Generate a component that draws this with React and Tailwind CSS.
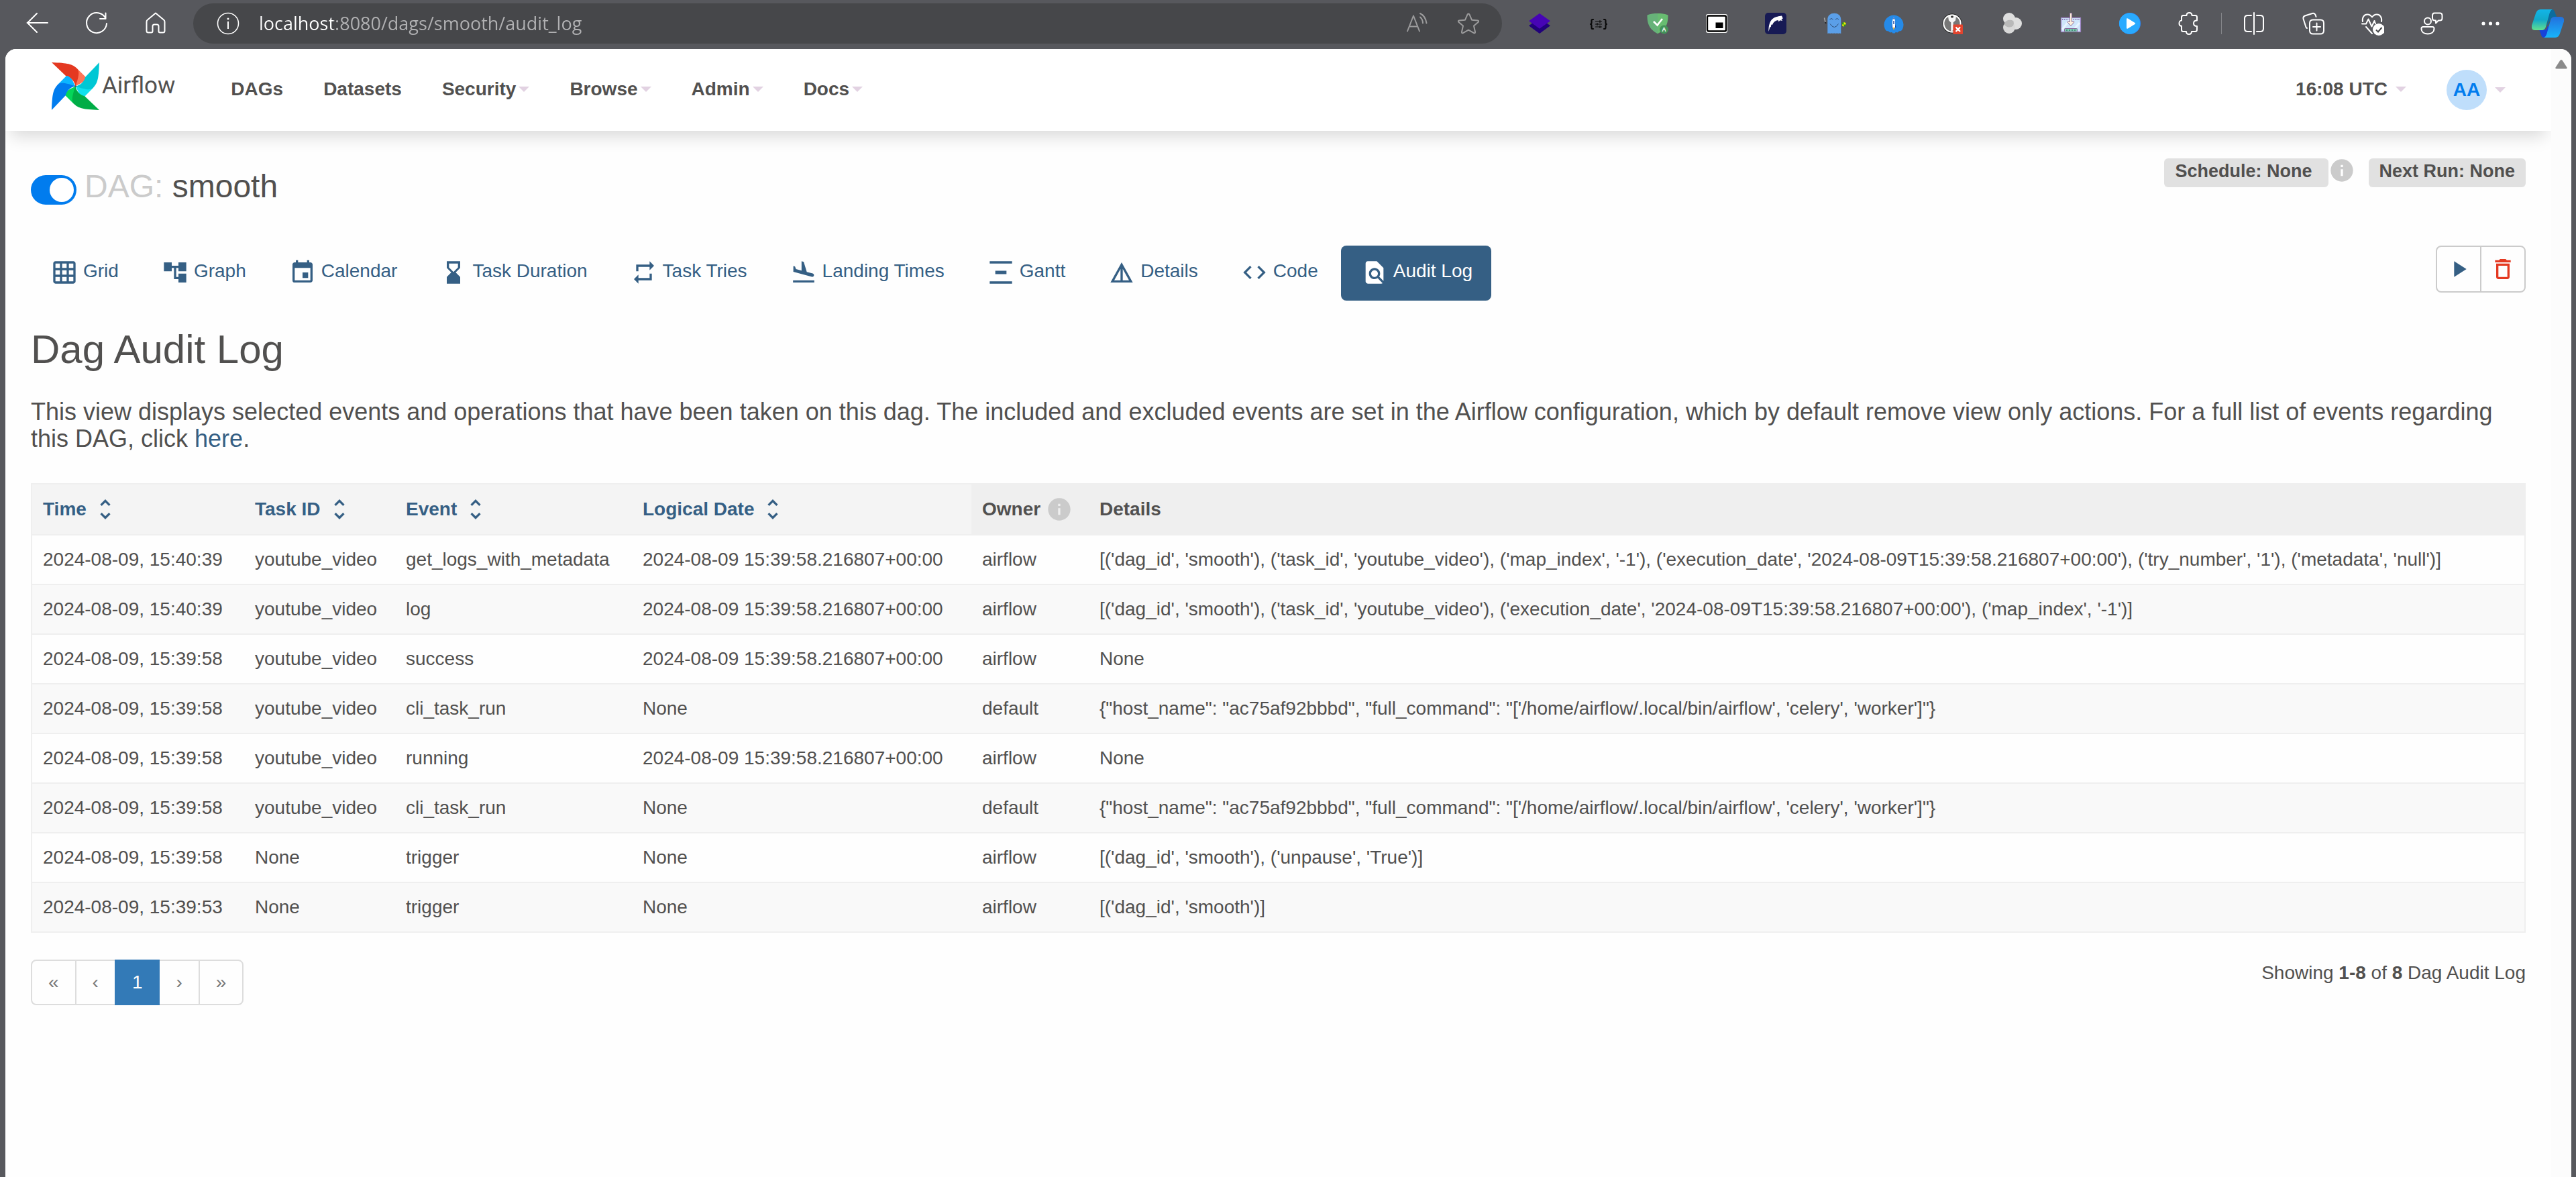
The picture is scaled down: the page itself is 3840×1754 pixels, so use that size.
import {
  MdAccountTree,
  MdCode,
  MdDeleteOutline,
  MdDetails,
  MdEvent,
  MdFindInPage,
  MdFlightLand,
  MdGridOn,
  MdHourglassBottom,
  MdInfo,
  MdPlayArrow,
  MdRepeat,
  MdUnfoldMore,
  MdVerticalDistribute,
} from "react-icons/md";

/* ---------- browser toolbar ---------- */

function Glyph({ children }) {
  return (
    <svg viewBox="0 0 36 36" className="size-9" fill="none" aria-hidden="true">
      {children}
    </svg>
  );
}

function Line({ d, color = "#fff", width = 2 }) {
  return (
    <path d={d} stroke={color} strokeWidth={width} strokeLinecap="round" strokeLinejoin="round" />
  );
}

function ToolButton({ label, children }) {
  return (
    <button type="button" aria-label={label} className="flex h-15 w-22 shrink-0 items-center justify-center">
      <Glyph>{children}</Glyph>
    </button>
  );
}

const extensions = [
  {
    label: "Layers",
    art: (
      <>
        <path d="M18 10l16 11.3L18 33 2 21.3z" fill="#21017a" />
        <path d="M18 3l16 11.3-16 11.4L2 14.3z" fill="#4704b5" />
      </>
    ),
  },
  {
    label: "JSON settings",
    art: (
      <>
        <Line color="#0a0a0a" width={2.2} d="M10 12H9q-1.500 0-1.500 2v2.500Q7.500 19 6 19q1.500 0 1.500 2.500V24q0 2 1.500 2h1M26 12h1q1.500 0 1.500 2v2.500q0 2.500 1.500 2.500-1.500 0-1.500 2.500V24q0 2-1.500 2h-1" />
        <Line color="#0a0a0a" width={1.2} d="M13.500 15h9M13.500 19h9M13.500 23h9M20 13.500v3M16 17.500v3M20 21.500v3" />
      </>
    ),
  },
  {
    label: "Ad blocker",
    art: (
      <>
        <path d="M18 3C12.500 3 7 3.600 2.500 5.500c0 9 .5 20 15.500 27.700z" fill="#67b279" />
        <path d="M18 3c5.500 0 11 .6 15.500 2.500 0 9-.5 20-15.500 27.700z" fill="#68bc71" />
        <path d="M12 15l5.500 5.500L25 11" stroke="#fff" strokeWidth="2.600" />
        <circle cx="27.500" cy="27" r="6.500" fill="#44935a" />
        <text x="27.500" y="30" textAnchor="middle" fontSize="9" fontWeight="700" fontFamily="Liberation Sans, sans-serif" fill="#fff">A</text>
      </>
    ),
  },
  {
    label: "Picture in picture",
    art: (
      <>
        <rect x="2" y="4" width="32" height="28" rx="3" fill="#fff" />
        <rect x="4" y="6.500" width="28" height="23" rx="2" stroke="#000" strokeWidth="2.400" />
        <rect x="16.500" y="16.500" width="11" height="8.500" fill="#000" />
      </>
    ),
  },
  {
    label: "Panther",
    art: (
      <>
        <rect x="2" y="2" width="32" height="32" rx="5" fill="#171a54" />
        <path d="M7.500 30C7 21 9.500 12 16.500 9c2-1 4-1 5.500-1.800l5-.7c.8 1.500 1.600 3 1.500 4.500l-2 .3 1.500 2.700-3.500-.7-2 2-1-2.300c-4 .5-7 3-8.500 7l-1.500-.5-.8 4-1.200-.5z" fill="#fff" />
      </>
    ),
  },
  {
    label: "Ghost",
    art: (
      <>
        <path d="M7.300 33V12.500C7.300 6 11.500 2.700 17.300 2.700S27.300 6 27.300 12.500V33l-2-.6-2 .6-2-.6-2 .6-2-.6-2 .6-2-.6-2 .6-2-.6z" fill="#5b9fe8" />
        <path d="M10.500 12q2.500-3 5 0M19 12q2.500-3 5 0M11 18.500q6.500 10 12.500 0" stroke="#2f4f78" strokeWidth="1" />
        <path d="M2.500 9.500l1.500 6.500" stroke="#aaa" strokeWidth="1.500" />
        <path d="M4 16l1.200 2" stroke="#222" strokeWidth="1.500" />
        <path d="M29 17l2.500-1 3 1v3.500L31.500 23 29 21z" fill="#2ea010" />
        <path d="M31.500 16l3 1v2.500h-3zM29 19.500h2.500V23L29 21z" fill="#f2e70c" />
      </>
    ),
  },
  {
    label: "Rocket",
    art: (
      <>
        <path d="M5 26.500A14.500 14.500 0 1 1 31 26.500l-2 2.500-3 .5-2.500 2-2.800-.5-1 1.500h-3.400l-1-1.500-2.800.5-2.500-2L7 29z" fill="#258ae8" />
        <path d="M18 8.500c1.500 2.500 2 5 2 8V24h-4v-7.500c0-3 .5-5.500 2-8z" fill="#fff" />
        <path d="M18 8.500l1 3h-2zM17.300 14h1.400v5h-1.400zM16 19l-1.500 5H16zM20 19l1.500 5H20z" fill="#173f9c" />
        <path d="M16.500 24h3L18 28z" fill="#f6b22c" />
      </>
    ),
  },
  {
    label: "Password manager",
    art: (
      <>
        <circle cx="17" cy="18" r="14.300" fill="#777" stroke="#222" strokeWidth="1" />
        <circle cx="17" cy="18" r="12.600" stroke="#fff" strokeWidth="2" />
        <path d="M11 7.500q6-3.500 12 0l-1 6-3.300 3V28l-3.400 2V16.500L12 13.500z" fill="#f5f5f5" />
        <rect x="15" y="6.500" width="4" height="3" rx="1.500" fill="#333" />
        <rect x="18.500" y="19.500" width="14.500" height="14.500" rx="1" fill="#e3442e" />
        <path d="M22.500 23.500l6.500 6.500M29 23.500l-6.500 6.500" stroke="#fff" strokeWidth="2.400" />
      </>
    ),
  },
  {
    label: "Bubbles",
    art: (
      <>
        <circle cx="14" cy="11" r="9" fill="#dedede" />
        <circle cx="24" cy="18" r="9" fill="#dedede" />
        <circle cx="14" cy="24" r="9" fill="#d8d8d8" />
        <path d="M6.500 19a9 9 0 0 1 14-4.500 9 9 0 0 1-.5 7 9 9 0 0 1-13.500-2.500z" fill="#b9b9b9" />
      </>
    ),
  },
  {
    label: "Video downloader",
    art: (
      <>
        <rect x="3.500" y="9.500" width="29" height="21" fill="#cfe6fb" stroke="#9a7fc0" strokeWidth="1.200" />
        <path d="M5 12h26" stroke="#8a78b8" strokeWidth="2" strokeDasharray="1.200 1.500" />
        <path d="M5 27l11-14M20 30l11-13" stroke="#e8f4ff" strokeWidth="3" />
        <rect x="8.500" y="25.500" width="19" height="5" rx="1" fill="#7cc9b1" stroke="#8a6a9a" strokeWidth="1" />
        <path d="M11 28h14" stroke="#4d8d7c" strokeWidth="1.800" strokeDasharray="2 2" />
        <path d="M16.500 2.500h3v13l2.500-1 1 1.500-5 5.500-5-5.500 1-1.500 2.500 1z" fill="#fdf1dc" stroke="#8a6a9a" strokeWidth="1" />
      </>
    ),
  },
  {
    label: "Player",
    art: (
      <>
        <circle cx="18" cy="18" r="16" fill="#2a8cff" />
        <circle cx="17.500" cy="18" r="15.500" fill="#29aaff" />
        <path d="M13 11.500q0-2 2-1l10.500 6.500q1.500 1 0 2L15 25.500q-2 1-2-1z" fill="#fff" />
      </>
    ),
  },
  {
    label: "Extensions",
    art: (
      <Line d="M7 13.500V8.500Q7 6 9.500 6h5c0-2.500 1.500-4 4-4s4 1.500 4 4h5q2.500 0 2.500 2.500v5c-3 0-5 1.500-5 4.300s2 4.200 5 4.200v5q0 3-2.500 3h-5.500c0 2.500-1.500 4-4 4s-4-1.500-4-4H9.500Q7 30 7 27.500v-5.800c-2 0-3.500-1.700-3.500-4s1.500-4.200 3.500-4.200z" />
    ),
  },
];

const browserTools = [
  {
    label: "Split screen",
    art: <Line d="M18 2v32M14 6H8.500Q4 6 4 10.500v15Q4 30 8.500 30H14M22 6h5.500Q32 6 32 10.500v15q0 4.500-4.500 4.500H22" />,
  },
  {
    label: "Collections",
    art: (
      <Line d="M18 12.500h11q5 0 5 5v11q0 5-5 5H18q-5 0-5-5v-11q0-5 5-5zM23.500 17.500v11M18 23h11M9 25q-1.500-.5-2-3L3.500 11Q3 7.500 6 6.500L17 3q3-1 4.500 2l1 3" />
    ),
  },
  {
    label: "Browser essentials",
    art: (
      <>
        <Line d="M4 15C3 9 6 4.500 11 4.500q4 0 7 4 3-4 7-4c5 0 8 4.500 7 10.500M3 18.500h6l3.500-7 5 11 4-8.500 1.500 4.500M9 23l9 10" />
        <circle cx="28" cy="27" r="9" fill="#fff" />
        <path d="M24 27.500l3 3 5.500-6.500" stroke="#46474a" strokeWidth="2" />
      </>
    ),
  },
  {
    label: "Feedback",
    art: (
      <>
        <circle cx="13" cy="14.500" r="5" stroke="#fff" strokeWidth="2" />
        <Line d="M6 23h14q2.500 0 2.500 2.500c0 5-4 8-9.500 8s-9.500-3-9.500-8Q3.500 23 6 23zM23 2.500h8q3.500 0 3.500 3.500v4q0 3.500-3.500 3.500h-2l-4 4v-4h-1.500Q20 13.500 20 10V6q0-3.500 3-3.500z" />
      </>
    ),
  },
  {
    label: "Settings and more",
    art: (
      <>
        <circle cx="8" cy="18" r="2.600" fill="#fff" />
        <circle cx="18.500" cy="18" r="2.600" fill="#fff" />
        <circle cx="29" cy="18" r="2.600" fill="#fff" />
      </>
    ),
  },
];

function Copilot() {
  return (
    <svg viewBox="0 0 48 42" className="h-[42px] w-12" aria-hidden="true">
      <defs>
        <linearGradient id="cpA" x1="0" y1="0" x2="0" y2="1">
          <stop offset="0" stopColor="#12b5e8" />
          <stop offset="0.500" stopColor="#12a9c9" />
          <stop offset="1" stopColor="#63e08e" />
        </linearGradient>
        <linearGradient id="cpB" x1="0" y1="0" x2="0" y2="1">
          <stop offset="0" stopColor="#2370dd" />
          <stop offset="1" stopColor="#17b4fb" />
        </linearGradient>
      </defs>
      <path d="M26 0h4q3 0 4.500 4l2.500 7h-4q-3 0-4.500 4l-6 10z" fill="#0b6c9e" />
      <path d="M11 30h11l2-6 4 6-7 12h-3q-3 0-4-4z" fill="#1743d8" />
      <path d="M13 0h18q-3 1-4.500 6L21 26q-1.500 5-6 5H5q-6 0-5-7L6 6q2-6 7-6z" fill="url(#cpA)" />
      <path d="M35 42H18q3-1 4.500-6L28 16q1.500-5 6-5h9q6 0 5 7l-6 18q-2 6-7 6z" fill="url(#cpB)" />
    </svg>
  );
}

function BrowserBar() {
  return (
    <header className="flex h-[73px] items-start pt-[5px] pl-3">
      <ToolButton label="Back">
        <Line d="M2.500 17H33M17 3L3 17l14 14" />
      </ToolButton>
      <ToolButton label="Refresh">
        <Line d="M31.500 10.500A15 15 0 1 0 33 18M31.500 2.500v8.500h-8.500" />
      </ToolButton>
      <ToolButton label="Home">
        <Line d="M18 2.500L6 12.500q-1.500 1-1.500 3V29q0 2.500 2.500 2.500h4.500q2 0 2-2V22q0-2.500 2.500-2.500h4q2.500 0 2.500 2.500v7.500q0 2 2 2H29q2.500 0 2.500-2.500V15.500q0-2-1.500-3z" />
      </ToolButton>
      <div className="ml-3 flex h-15 min-w-0 flex-1 items-center rounded-full bg-[#46474a] pl-8.5 pr-3">
        <Glyph>
          <circle cx="18" cy="18" r="15.500" stroke="#fff" strokeWidth="1.600" />
          <path d="M18 15v11" stroke="#fff" strokeWidth="2" />
          <circle cx="18" cy="11" r="1.500" fill="#fff" />
        </Glyph>
        <input
          aria-label="Address"
          defaultValue="localhost:8080/dags/smooth/audit_log"
          className="ml-7 h-10 min-w-0 flex-1 bg-[linear-gradient(90deg,#fff_111px,#b1b1b3_111px)] bg-clip-text font-['Open_Sans','Noto_Sans',sans-serif] text-[27px] leading-10 text-transparent outline-none"
        />
        <button type="button" aria-label="Read aloud" className="flex w-20 justify-center">
          <Glyph>
            <Line color="#9b9b9c" d="M5 29.500L14 6.500l9 23M8 22.500h12M24 8.500q4 3.500 4 9M24 3q8 4 9.500 14.500" />
          </Glyph>
        </button>
        <button type="button" aria-label="Add to favorites" className="flex w-19 justify-center">
          <Glyph>
            <Line color="#9b9b9c" d="M18 3.500q1 0 1.500 1.200l3.500 8 8.700.8q2.500.5.800 2.500L26 21.500l2 9q.2 2.500-2 1.700l-8-4.500-8 4.500q-2.200.8-2-1.700l2-9L3.500 16q-1.700-2 .8-2.500l8.700-.8 3.500-8Q17 3.500 18 3.500z" />
          </Glyph>
        </button>
      </div>
      <div className="ml-3 flex shrink-0 items-center">
        {extensions.map((e) => (
          <ToolButton key={e.label} label={e.label}>
            {e.art}
          </ToolButton>
        ))}
        <span className="mx-1 h-8 w-px bg-[#85868a]" />
        {browserTools.map((t) => (
          <ToolButton key={t.label} label={t.label}>
            {t.art}
          </ToolButton>
        ))}
        <button type="button" aria-label="Copilot" className="flex w-21 justify-center">
          <Copilot />
        </button>
      </div>
    </header>
  );
}

/* ---------- Airflow ---------- */

const blades = [
  { turn: 0, dark: "#e43921", light: "#ff7557" },
  { turn: 90, dark: "#00c7d4", light: "#11e1ee" },
  { turn: 180, dark: "#00ad46", light: "#04d659" },
  { turn: 270, dark: "#017cee", light: "#0cb6ff" },
];

function Pinwheel() {
  return (
    <svg viewBox="0 0 70 70" className="size-[71px]" aria-hidden="true">
      {blades.map((b) => (
        <g key={b.turn} transform={`rotate(${b.turn} 35 35)`}>
          <path d="M38 9.500L49.500 21Q51 22 50 24C47 30 42 31 35 35z" fill={b.light} />
          <path d="M0 0C24 1 30 2 38 9.500 41 14 40 21 35 35 33.500 27 28 22 21.500 20.500z" fill={b.dark} />
        </g>
      ))}
      <circle cx="35" cy="35" r="1.200" fill="#51504f" />
    </svg>
  );
}

function Caret() {
  return <span className="size-0 border-x-8 border-t-8 border-x-transparent border-t-[#e2d2e2]" />;
}

const menu = [
  { name: "DAGs" },
  { name: "Datasets" },
  { name: "Security", drop: true },
  { name: "Browse", drop: true },
  { name: "Admin", drop: true },
  { name: "Docs", drop: true },
];

function NavBar() {
  return (
    <nav className="flex h-[122px] items-center bg-white pr-17 pl-[69px] text-[28px] font-bold shadow-[0_16px_24px_-8px_rgba(0,0,0,0.15)]">
      <a href="#home" className="mr-[83px] flex items-center gap-1 pb-3 font-['Roboto',sans-serif] text-[35px] leading-10 font-normal">
        <Pinwheel />
        Airflow
      </a>
      <div className="flex flex-1 gap-15 pb-0.5">
        {menu.map((m) =>
          m.drop ? (
            <button key={m.name} type="button" className="flex items-center gap-1 leading-10">
              {m.name}
              <Caret />
            </button>
          ) : (
            <a key={m.name} href={`#${m.name}`} className="leading-10">
              {m.name}
            </a>
          ),
        )}
      </div>
      <button type="button" className="mr-15 flex items-center gap-3 pb-0.5 leading-10">
        16:08 UTC
        <Caret />
      </button>
      <button type="button" className="flex items-center gap-3">
        <span className="flex size-15 items-center justify-center rounded-full bg-[#bfdefb] text-[#017cee]">AA</span>
        <Caret />
      </button>
    </nav>
  );
}

const tabs = [
  { name: "Grid", Icon: MdGridOn },
  { name: "Graph", Icon: MdAccountTree },
  { name: "Calendar", Icon: MdEvent },
  { name: "Task Duration", Icon: MdHourglassBottom },
  { name: "Task Tries", Icon: MdRepeat },
  { name: "Landing Times", Icon: MdFlightLand },
  { name: "Gantt", Icon: MdVerticalDistribute },
  { name: "Details", Icon: MdDetails },
  { name: "Code", Icon: MdCode },
  { name: "Audit Log", Icon: MdFindInPage, active: true },
];

function DagHeader() {
  return (
    <div className="flex items-start justify-between">
      <div className="flex items-center gap-3 pt-3">
        <label className="flex items-center pt-2.5">
          <input type="checkbox" role="switch" defaultChecked aria-label="Pause or unpause DAG" className="peer sr-only" />
          <span className="flex h-11 w-17 items-center justify-end rounded-full bg-[#cbcbcb] p-1 peer-checked:bg-[#017cee]">
            <span className="size-9 rounded-full bg-white" />
          </span>
        </label>
        <h3 className="text-[48px] leading-[60px]">
          <span className="text-[#cbcbcb]">DAG:</span> smooth
        </h3>
      </div>
      <div className="flex items-start text-[27px] leading-8 font-bold">
        <a href="#schedule" className="rounded-md bg-[#e1e1e1] pt-[3px] pr-6 pb-2 pl-4">Schedule: None</a>
        <MdInfo className="size-10 -translate-y-0.5 text-[#cbcbcb]" />
        <span className="ml-5 rounded-md bg-[#e1e1e1] px-4 pt-[3px] pb-2">Next Run: None</span>
      </div>
    </div>
  );
}

function DagTabs() {
  return (
    <div className="mt-[58px] flex items-start justify-between">
      <ul className="flex gap-1">
        {tabs.map(({ name, Icon, active }) => (
          <li key={name}>
            <a
              href={`#${name}`}
              className={
                active
                  ? "flex items-center gap-2 rounded-lg bg-[#355f84] pt-5 pr-7 pb-5.5 pl-7.5 text-white"
                  : "flex items-center gap-2 rounded-lg px-7.5 pt-5 pb-5.5 text-[#355f84]"
              }
            >
              <Icon className="size-10" />
              <span className="pb-1 leading-9">{name}</span>
            </a>
          </li>
        ))}
      </ul>
      <div className="flex h-[70px] divide-x-2 divide-[#cbcbcb] rounded-lg border-2 border-[#cbcbcb]">
        <button type="button" aria-label="Trigger DAG" className="flex w-[66px] items-center justify-center text-[#355f84]">
          <MdPlayArrow className="size-10" />
        </button>
        <button type="button" aria-label="Delete DAG" className="flex w-16 items-center justify-center text-[#e43921]">
          <MdDeleteOutline className="size-10" />
        </button>
      </div>
    </div>
  );
}

const columns = [
  { name: "Time", sort: true, width: "w-[317px]" },
  { name: "Task ID", sort: true, width: "w-[225px]" },
  { name: "Event", sort: true, width: "w-[353px]" },
  { name: "Logical Date", sort: true, width: "w-[506px]" },
  { name: "Owner", info: true, width: "w-[175px]" },
  { name: "Details", width: "w-auto" },
];

const run = "2024-08-09 15:39:58.216807+00:00";
const cli = `{"host_name": "ac75af92bbbd", "full_command": "['/home/airflow/.local/bin/airflow', 'celery', 'worker']"}`;

const rows = [
  ["2024-08-09, 15:40:39", "youtube_video", "get_logs_with_metadata", run, "airflow", "[('dag_id', 'smooth'), ('task_id', 'youtube_video'), ('map_index', '-1'), ('execution_date', '2024-08-09T15:39:58.216807+00:00'), ('try_number', '1'), ('metadata', 'null')]"],
  ["2024-08-09, 15:40:39", "youtube_video", "log", run, "airflow", "[('dag_id', 'smooth'), ('task_id', 'youtube_video'), ('execution_date', '2024-08-09T15:39:58.216807+00:00'), ('map_index', '-1')]"],
  ["2024-08-09, 15:39:58", "youtube_video", "success", run, "airflow", "None"],
  ["2024-08-09, 15:39:58", "youtube_video", "cli_task_run", "None", "default", cli],
  ["2024-08-09, 15:39:58", "youtube_video", "running", run, "airflow", "None"],
  ["2024-08-09, 15:39:58", "youtube_video", "cli_task_run", "None", "default", cli],
  ["2024-08-09, 15:39:58", "None", "trigger", "None", "airflow", "[('dag_id', 'smooth'), ('unpause', 'True')]"],
  ["2024-08-09, 15:39:53", "None", "trigger", "None", "airflow", "[('dag_id', 'smooth')]"],
];

function AuditTable() {
  return (
    <table className="mt-[46px] w-full table-fixed border-collapse border-2 border-[#efefef] text-left">
      <thead>
        <tr className="border-b-2 border-[#efefef]">
          {columns.map((c) => (
            <th key={c.name} className={`${c.width} ${c.sort ? "bg-[#f4f4f4]" : "bg-[#efefef]"} px-4 py-[17px] font-bold`}>
              {c.sort ? (
                <a href={`#sort-${c.name}`} className="flex items-center gap-2 leading-10 text-[#355f84]">
                  {c.name}
                  <MdUnfoldMore className="size-10" />
                </a>
              ) : (
                <span className="flex items-center gap-2 leading-10">
                  {c.name}
                  {c.info && <MdInfo className="size-10 text-[#cbcbcb]" />}
                </span>
              )}
            </th>
          ))}
        </tr>
      </thead>
      <tbody>
        {rows.map((r, i) => (
          <tr key={i} className="border-b-2 border-[#efefef] even:bg-[#f9f9f9]">
            {r.map((cell, j) => (
              <td key={j} className="px-4 py-4 leading-10 whitespace-nowrap">
                {cell}
              </td>
            ))}
          </tr>
        ))}
      </tbody>
    </table>
  );
}

const pages = ["«", "‹", "1", "›", "»"];

function TableFooter() {
  return (
    <div className="mt-10 flex items-start justify-between">
      <nav aria-label="Pages" className="flex">
        {pages.map((p) => (
          <a
            key={p}
            href={`#page-${p}`}
            className={
              p === "1"
                ? "z-10 -ml-0.5 border-2 border-[#337ab7] bg-[#337ab7] px-6 py-3 leading-10 text-white"
                : "-ml-0.5 border-2 border-[#ddd] px-6 py-3 leading-10 text-[#777] first:ml-0 first:rounded-l-lg last:rounded-r-lg"
            }
          >
            {p}
          </a>
        ))}
      </nav>
      <p className="leading-10">
        Showing <b>1-8</b> of <b>8</b> Dag Audit Log
      </p>
    </div>
  );
}

export default function App() {
  return (
    <div className="flex min-h-screen flex-col bg-[#57585d]">
      <BrowserBar />
      <div className="mr-[7px] ml-2 flex flex-1 overflow-hidden rounded-t-2xl bg-[#fefefe] font-['Liberation_Sans',Arial,sans-serif] text-[28px] text-[#51504f]">
        <div className="min-w-0 flex-1 overflow-hidden">
          <NavBar />
          <main className="px-[38px] pt-[41px]">
            <DagHeader />
            <DagTabs />
            <h2 className="mt-10 text-[60px] leading-[66px]">Dag Audit Log</h2>
            <p className="mt-10 text-[36px] leading-10">
              This view displays selected events and operations that have been taken on this dag. The included and excluded
              events are set in the Airflow configuration, which by default remove view only actions. For a full list of
              events regarding this DAG, click{" "}
              <a href="#logs" className="text-[#355f84]">here</a>.
            </p>
            <AuditTable />
            <TableFooter />
          </main>
        </div>
        <div className="flex w-[30px] flex-col items-center bg-[#fcfcfc] pt-4">
          <svg viewBox="0 0 18 14" className="h-3.5 w-[18px]" aria-hidden="true">
            <path d="M7 1.500q2-3 4 0l6.500 10q.8 2-1.500 2H2q-2.300 0-1.500-2z" fill="#8a8a8a" />
          </svg>
        </div>
      </div>
    </div>
  );
}
